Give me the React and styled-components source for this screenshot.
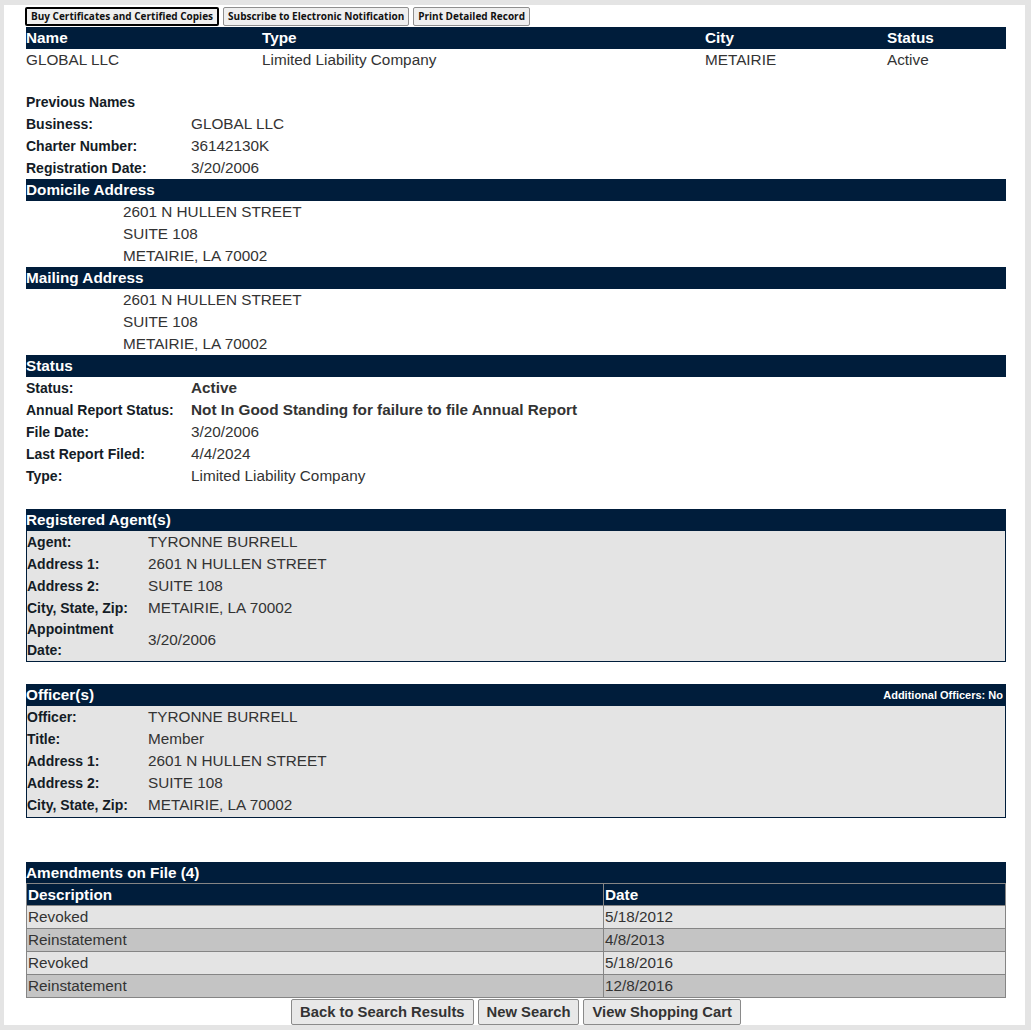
import React from "react";
import styled, { createGlobalStyle } from "styled-components";

const NAVY = "#001d3b";
const FS = "15.3px";

const GlobalStyle = createGlobalStyle`
  html, body { margin: 0; padding: 0; background: #e4e4e4; }
  body { font-family: "Liberation Sans", Arial, sans-serif; font-size: ${FS}; color: #333; }
  * { box-sizing: border-box; }
`;

const Page = styled.div`
  background: #fff;
  margin: 5px 6px 5px 4px;
  padding: 2px 19px 0 22px;
  min-height: 1020px;
`;

const ButtonBar = styled.div`
  display: flex;
  gap: 4px;
  height: 20px;
  align-items: flex-start;
  margin-left: -1px;
`;

const SmallButton = styled.button`
  font-family: "Open Sans", Tahoma, sans-serif;
  font-weight: 700;
  font-size: 10px;
  line-height: 13px;
  color: #111;
  background: #efefef;
  border: ${(p) => (p.$focused ? "2px solid #000" : "1px solid #8f8f8f")};
  border-radius: 2px;
  padding: ${(p) => (p.$focused ? "1px 4px" : "2px 4px")};
  height: 19px;
  cursor: pointer;
`;

const Grid = styled.div`
  display: grid;
  grid-template-columns: ${(p) => p.$cols};
  align-items: center;
`;

const HeadRow = styled(Grid)`
  background: ${NAVY};
  color: #fff;
  font-weight: 700;
  height: 22px;
  line-height: 22px;
`;

const DataRow = styled(Grid)`
  height: 22px;
  line-height: 22px;
  color: #333;
`;

const Spacer = styled.div`
  height: ${(p) => p.$h}px;
`;

const SectionTitle = styled.div`
  color: #141c26;
  font-weight: 700;
  font-size: 14px;
  height: 21px;
  line-height: 21px;
`;

const DetailRow = styled.div`
  display: grid;
  grid-template-columns: ${(p) => p.$label || 165}px 1fr;
  align-items: center;
  min-height: 22px;
  line-height: 22px;
`;

const Label = styled.div`
  color: #141c26;
  font-weight: 700;
  font-size: 14px;
  line-height: ${(p) => (p.$wrap ? "21px" : "22px")};
`;

const Value = styled.div`
  color: #333;
  font-weight: ${(p) => (p.$bold ? 700 : 400)};
`;

const SectionBar = styled.div`
  background: ${NAVY};
  color: #fff;
  font-weight: 700;
  height: 22px;
  line-height: 22px;
  display: flex;
  justify-content: space-between;
  align-items: center;
  padding-right: 3px;
`;

const BoxBar = styled(SectionBar)`
  margin: -1px -1px 0;
`;

const BarNote = styled.span`
  font-size: 11px;
`;

const AddressLine = styled.div`
  padding-left: 97px;
  height: 22px;
  line-height: 22px;
  color: #333;
`;

const Box = styled.div`
  border: 1px solid ${NAVY};
  background: #e4e4e4;
  padding-bottom: ${(p) => p.$pb || 0}px;
`;

const AmendTitle = styled.div`
  background: ${NAVY};
  color: #fff;
  font-weight: 700;
  height: 22px;
  line-height: 21px;
  border-bottom: 1px solid #858585;
`;

const AmendRowBase = styled.div`
  display: grid;
  grid-template-columns: 578px 1fr;
`;

const AmendHeadRow = styled(AmendRowBase)`
  background: ${NAVY};
  color: #fff;
  font-weight: 700;
`;

const AmendRow = styled(AmendRowBase)`
  background: ${(p) => (p.$alt ? "#c4c4c4" : "#e4e4e4")};
  color: #333;
`;

const Cell = styled.div`
  height: ${(p) => (p.$head ? 22 : 23)}px;
  line-height: ${(p) => (p.$head ? 21 : 22)}px;
  padding-left: 1px;
  border-bottom: 1px solid #858585;
  border-left: ${(p) => (p.$first ? "1px solid #858585" : "none")};
  border-right: 1px solid #858585;
`;

const BottomBar = styled.div`
  display: flex;
  justify-content: center;
  gap: 4px;
  margin-top: 1px;
`;

const BigButton = styled.button`
  font-family: "Liberation Sans", Arial, sans-serif;
  font-weight: 700;
  font-size: 14.8px;
  color: #333;
  background: #e8e8e8;
  border: 1px solid #8a8a8a;
  border-radius: 2px;
  height: 26px;
  padding: 0 8px;
  cursor: pointer;
`;

const mainCols = "236px 443px 182px 1fr";

const agent = [
  ["Agent:", "TYRONNE BURRELL"],
  ["Address 1:", "2601 N HULLEN STREET"],
  ["Address 2:", "SUITE 108"],
  ["City, State, Zip:", "METAIRIE, LA 70002"],
  ["Appointment Date:", "3/20/2006"],
];

const officer = [
  ["Officer:", "TYRONNE BURRELL"],
  ["Title:", "Member"],
  ["Address 1:", "2601 N HULLEN STREET"],
  ["Address 2:", "SUITE 108"],
  ["City, State, Zip:", "METAIRIE, LA 70002"],
];

const amendments = [
  ["Revoked", "5/18/2012"],
  ["Reinstatement", "4/8/2013"],
  ["Revoked", "5/18/2016"],
  ["Reinstatement", "12/8/2016"],
];

const address = ["2601 N HULLEN STREET", "SUITE 108", "METAIRIE, LA 70002"];

function BoxRows({ rows }) {
  return rows.map(([l, v]) => (
    <DetailRow key={l} $label={121}>
      <Label $wrap={l.length > 16}>{l}</Label>
      <Value>{v}</Value>
    </DetailRow>
  ));
}

export default function App() {
  return (
    <>
      <GlobalStyle />
      <Page>
        <ButtonBar>
          <SmallButton $focused>Buy Certificates and Certified Copies</SmallButton>
          <SmallButton>Subscribe to Electronic Notification</SmallButton>
          <SmallButton>Print Detailed Record</SmallButton>
        </ButtonBar>
        <HeadRow $cols={mainCols}>
          <div>Name</div>
          <div>Type</div>
          <div>City</div>
          <div>Status</div>
        </HeadRow>
        <DataRow $cols={mainCols}>
          <div>GLOBAL LLC</div>
          <div>Limited Liability Company</div>
          <div>METAIRIE</div>
          <div>Active</div>
        </DataRow>
        <Spacer $h={21} />
        <SectionTitle>Previous Names</SectionTitle>
        <DetailRow>
          <Label>Business:</Label>
          <Value>GLOBAL LLC</Value>
        </DetailRow>
        <DetailRow>
          <Label>Charter Number:</Label>
          <Value>36142130K</Value>
        </DetailRow>
        <DetailRow>
          <Label>Registration Date:</Label>
          <Value>3/20/2006</Value>
        </DetailRow>

        <SectionBar>Domicile Address</SectionBar>
        {address.map((l) => (
          <AddressLine key={"d" + l}>{l}</AddressLine>
        ))}
        <SectionBar>Mailing Address</SectionBar>
        {address.map((l) => (
          <AddressLine key={"m" + l}>{l}</AddressLine>
        ))}
        <SectionBar>Status</SectionBar>
        <DetailRow>
          <Label>Status:</Label>
          <Value $bold>Active</Value>
        </DetailRow>
        <DetailRow>
          <Label>Annual Report Status:</Label>
          <Value $bold>Not In Good Standing for failure to file Annual Report</Value>
        </DetailRow>
        <DetailRow>
          <Label>File Date:</Label>
          <Value>3/20/2006</Value>
        </DetailRow>
        <DetailRow>
          <Label>Last Report Filed:</Label>
          <Value>4/4/2024</Value>
        </DetailRow>
        <DetailRow>
          <Label>Type:</Label>
          <Value>Limited Liability Company</Value>
        </DetailRow>

        <Spacer $h={22} />
        <Box>
          <BoxBar>Registered Agent(s)</BoxBar>
          <BoxRows rows={agent} />
        </Box>

        <Spacer $h={22} />
        <Box $pb={1}>
          <BoxBar>
            <span>Officer(s)</span>
            <BarNote>Additional Officers: No</BarNote>
          </BoxBar>
          <BoxRows rows={officer} />
        </Box>

        <Spacer $h={44} />
        <div>
          <AmendTitle>Amendments on File (4)</AmendTitle>
          <AmendHeadRow>
            <Cell $first $head>Description</Cell>
            <Cell $head>Date</Cell>
          </AmendHeadRow>
          {amendments.map(([d, t], i) => (
            <AmendRow key={i} $alt={i % 2 === 1}>
              <Cell $first>{d}</Cell>
              <Cell>{t}</Cell>
            </AmendRow>
          ))}
        </div>
        <BottomBar>
          <BigButton>Back to Search Results</BigButton>
          <BigButton>New Search</BigButton>
          <BigButton>View Shopping Cart</BigButton>
        </BottomBar>
      </Page>
    </>
  );
}
